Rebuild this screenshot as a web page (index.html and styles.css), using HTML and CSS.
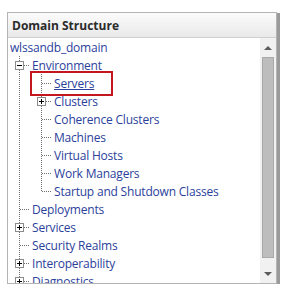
FILE: index.html
```html
<!DOCTYPE html>
<html lang="en">
<head>
    <meta charset="UTF-8">
    <title>Domain Structure</title>
    <link rel="stylesheet" href="styles.css">
</head>
<body>

    <div class="panel">
        <div class="panel-header">Domain Structure</div>

        <div class="panel-body">
            <!-- Tree -->
            <div class="tree">
                <div class="row"><a class="label root">wlssandb_domain</a></div>

                <div class="row">
                    <span class="cell tee first"><svg class="toggle" width="9" height="9" viewBox="0 0 9 9"><rect x="0.5" y="0.5" width="8" height="8" fill="#fff" stroke="#8c8c8c"/><path d="M2 4.5h5" stroke="#000"/></svg></span>
                    <a class="label">Environment</a>
                </div>
                <div class="row">
                    <span class="cell pipe"></span><span class="cell tee first"></span>
                    <a class="label current">Servers</a>
                </div>
                <div class="row">
                    <span class="cell pipe"></span><span class="cell tee"><svg class="toggle" width="9" height="9" viewBox="0 0 9 9"><rect x="0.5" y="0.5" width="8" height="8" fill="#fff" stroke="#8c8c8c"/><path d="M2 4.5h5M4.5 2v5" stroke="#000"/></svg></span>
                    <a class="label">Clusters</a>
                </div>
                <div class="row">
                    <span class="cell pipe"></span><span class="cell tee"></span>
                    <a class="label">Coherence Clusters</a>
                </div>
                <div class="row">
                    <span class="cell pipe"></span><span class="cell tee"></span>
                    <a class="label">Machines</a>
                </div>
                <div class="row">
                    <span class="cell pipe"></span><span class="cell tee"></span>
                    <a class="label">Virtual Hosts</a>
                </div>
                <div class="row">
                    <span class="cell pipe"></span><span class="cell tee"></span>
                    <a class="label">Work Managers</a>
                </div>
                <div class="row">
                    <span class="cell pipe"></span><span class="cell end"></span>
                    <a class="label">Startup and Shutdown Classes</a>
                </div>

                <div class="row">
                    <span class="cell tee"></span>
                    <a class="label">Deployments</a>
                </div>
                <div class="row">
                    <span class="cell tee"><svg class="toggle" width="9" height="9" viewBox="0 0 9 9"><rect x="0.5" y="0.5" width="8" height="8" fill="#fff" stroke="#8c8c8c"/><path d="M2 4.5h5M4.5 2v5" stroke="#000"/></svg></span>
                    <a class="label">Services</a>
                </div>
                <div class="row">
                    <span class="cell tee"></span>
                    <a class="label">Security Realms</a>
                </div>
                <div class="row">
                    <span class="cell tee"><svg class="toggle" width="9" height="9" viewBox="0 0 9 9"><rect x="0.5" y="0.5" width="8" height="8" fill="#fff" stroke="#8c8c8c"/><path d="M2 4.5h5M4.5 2v5" stroke="#000"/></svg></span>
                    <a class="label">Interoperability</a>
                </div>
                <div class="row">
                    <span class="cell tee"><svg class="toggle" width="9" height="9" viewBox="0 0 9 9"><rect x="0.5" y="0.5" width="8" height="8" fill="#fff" stroke="#8c8c8c"/><path d="M2 4.5h5M4.5 2v5" stroke="#000"/></svg></span>
                    <a class="label">Diagnostics</a>
                </div>

                <!-- red callout around Servers -->
                <div class="callout"></div>
            </div>

            <!-- Scrollbar -->
            <div class="scrollbar">
                <div class="scroll-btn"><span class="arrow up"></span></div>
                <div class="scroll-track"><div class="scroll-thumb"></div></div>
                <div class="scroll-btn"><span class="arrow down"></span></div>
            </div>
        </div>
    </div>

</body>
</html>
```

FILE: styles.css
```css
/* Reset */
* {
    margin: 0;
    padding: 0;
    box-sizing: border-box;
}

body {
    background: #ffffff;
    font-family: 'Open Sans', 'DejaVu Sans', sans-serif;
}

/* Panel */
.panel {
    margin: 12px 0 0 7px;
    width: 270px;
    height: 272px;
    border: 1px solid #b4b4b4;
    box-shadow: 2px 2px 0 1px #9a9a9a;
    display: flex;
    flex-direction: column;
    background: #fff;
}

.panel-header {
    height: 25px;
    flex: none;
    padding: 0 4px;
    display: flex;
    align-items: center;
    font-size: 12px;
    font-weight: 700;
    color: #2b2b2b;
    background: linear-gradient(#fbfbfb, #e9e9e9);
    border-bottom: 1px solid #cfcfcf;
}

.panel-body {
    flex: 1;
    display: flex;
    overflow: hidden;
}

/* Tree */
.tree {
    flex: 1;
    position: relative;
    overflow: hidden;
}

.row {
    height: 18px;
    display: flex;
    align-items: center;
    white-space: nowrap;
}

.label {
    font-size: 12px;
    letter-spacing: -0.2px;
    color: #2b3f9b;
    padding-left: 2px;
    text-decoration: none;
}

.label.current {
    text-decoration: underline;
}

.cell {
    flex: none;
    width: 22px;
    height: 18px;
    display: flex;
    align-items: center;
    background-repeat: no-repeat;
}

/* dotted guide lines */
.cell.pipe {
    background-image: repeating-linear-gradient(to bottom, #6e6e6e 0 1px, transparent 1px 2px);
    background-position: 11px 0;
    background-size: 1px 100%;
}

.cell.tee {
    background-image:
        repeating-linear-gradient(to right, #6e6e6e 0 1px, transparent 1px 2px),
        repeating-linear-gradient(to bottom, #6e6e6e 0 1px, transparent 1px 2px);
    background-position: 12px 9px, 11px 0;
    background-size: 10px 1px, 1px 100%;
}

.cell.end {
    background-image:
        repeating-linear-gradient(to right, #6e6e6e 0 1px, transparent 1px 2px),
        repeating-linear-gradient(to bottom, #6e6e6e 0 1px, transparent 1px 2px);
    background-position: 12px 9px, 11px 0;
    background-size: 10px 1px, 1px 10px;
}

.toggle {
    display: block;
    margin-left: 7px;
}

.callout {
    position: absolute;
    left: 22px;
    top: 33px;
    width: 83px;
    height: 25px;
    border: 2px solid #c3161f;
}

/* Scrollbar */
.scrollbar {
    flex: none;
    width: 16px;
    background: #f1f1f1;
    display: flex;
    flex-direction: column;
}

.scroll-btn {
    height: 19px;
    flex: none;
    display: flex;
    align-items: center;
    justify-content: center;
}

.scroll-track {
    flex: 1;
    padding: 0 2px;
}

.scroll-thumb {
    height: 201px;
    background: #bdbdbd;
    border: 1px solid #a9a9a9;
}

.arrow {
    width: 0;
    height: 0;
    border-left: 4px solid transparent;
    border-right: 4px solid transparent;
}

.arrow.up {
    border-bottom: 4px solid #5c5c5c;
}

.arrow.down {
    border-top: 4px solid #5c5c5c;
}
```
